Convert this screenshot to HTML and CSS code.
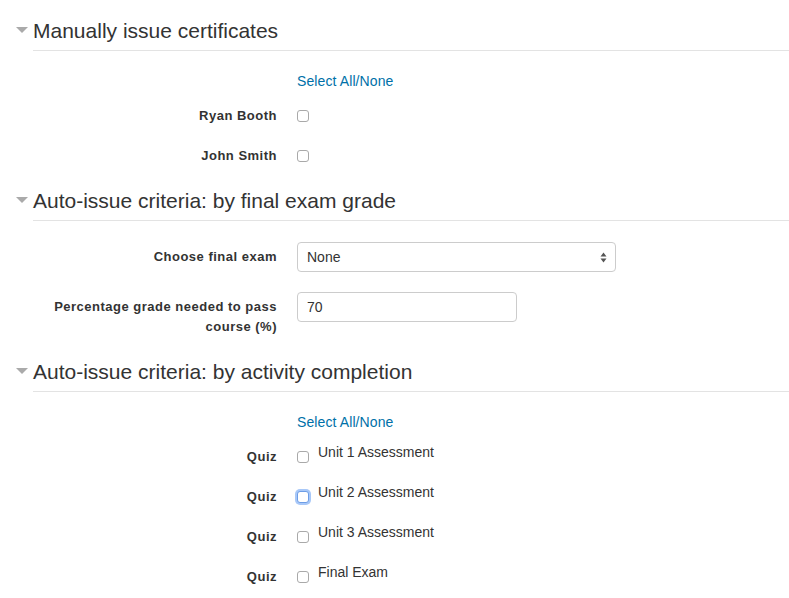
FILE: index.html
```html
<!DOCTYPE html>
<html>
<head>
    <meta http-equiv="Content-Type" content="text/html; charset=UTF-8">
    <title>Certificates</title>
    <link rel="stylesheet" href="styles.css">
</head>

<body>
    <form class="mform">
        <div class="section first">
            <h2 class="legend">Manually issue certificates</h2>
            <div class="row short">
                <div class="label"></div>
                <div class="control"><a href="#" class="select-all">Select All/None</a></div>
            </div>
            <div class="row">
                <div class="label">Ryan Booth</div>
                <div class="control"><input type="checkbox" class="check"></div>
            </div>
            <div class="row">
                <div class="label">John Smith</div>
                <div class="control"><input type="checkbox" class="check"></div>
            </div>
        </div>

        <div class="section">
            <h2 class="legend">Auto-issue criteria: by final exam grade</h2>
            <div class="row field first-field">
                <div class="label padded">Choose final exam</div>
                <div class="control">
                    <div class="select">
                        <span>None</span>
                        <svg class="arrows" width="7" height="11" viewBox="0 0 7 11">
                            <path d="M3.5 0.5 L6.5 4.5 L0.5 4.5 Z M3.5 10.5 L6.5 6.5 L0.5 6.5 Z" fill="#555"/>
                        </svg>
                    </div>
                </div>
            </div>
            <div class="row field">
                <div class="label padded">Percentage grade needed to pass course (%)</div>
                <div class="control">
                    <div class="text-input">70</div>
                </div>
            </div>
        </div>

        <div class="section after-fields">
            <h2 class="legend">Auto-issue criteria: by activity completion</h2>
            <div class="row short">
                <div class="label"></div>
                <div class="control"><a href="#" class="select-all">Select All/None</a></div>
            </div>
            <div class="row">
                <div class="label">Quiz</div>
                <div class="control activity"><input type="checkbox" class="check"><span>Unit 1 Assessment</span></div>
            </div>
            <div class="row">
                <div class="label">Quiz</div>
                <div class="control activity"><input type="checkbox" class="check focused"><span>Unit 2 Assessment</span></div>
            </div>
            <div class="row">
                <div class="label">Quiz</div>
                <div class="control activity"><input type="checkbox" class="check"><span>Unit 3 Assessment</span></div>
            </div>
            <div class="row">
                <div class="label">Quiz</div>
                <div class="control activity"><input type="checkbox" class="check"><span>Final Exam</span></div>
            </div>
        </div>
    </form>
</body>

</html>
```

FILE: styles.css
```css
body {
    margin: 0;
    font-family: "Liberation Sans", Arial, sans-serif;
    font-size: 14px;
    color: #333;
    background: #fff;
}

.section {
    margin-top: 13px;
}
.section.first {
    margin-top: 19px;
}
.section.after-fields {
    margin-top: 23px;
}

.legend {
    margin: 0 0 0 33px;
    padding-bottom: 7px;
    border-bottom: 1px solid #e3e3e3;
    font-size: 21px;
    font-weight: normal;
    line-height: 24px;
    color: #333;
}
.legend::before {
    content: "";
    display: inline-block;
    margin-left: -17px;
    margin-right: 5px;
    vertical-align: middle;
    position: relative;
    top: -2px;
    border-left: 6px solid transparent;
    border-right: 6px solid transparent;
    border-top: 6px solid #aaa;
}

.row {
    display: flex;
    height: 40px;
    align-items: center;
}
.row.short {
    height: 30px;
    margin-top: 15px;
}

.label {
    width: 244px;
    margin-left: 33px;
    text-align: right;
    font-size: 13px;
    font-weight: bold;
    letter-spacing: 0.5px;
    line-height: 20px;
}

.control {
    margin-left: 20px;
    display: flex;
    align-items: center;
}

.select-all {
    color: #0070a8;
    text-decoration: none;
    letter-spacing: 0.1px;
}

.check {
    appearance: none;
    -webkit-appearance: none;
    box-sizing: border-box;
    width: 12px;
    height: 12px;
    margin: -1px 0 0 0;
    border: 1px solid #a9a9a9;
    border-radius: 3px;
    background: #fff;
}
.check.focused {
    border-color: #6d9de6;
    box-shadow: 0 0 0 2px #a8c8f8;
}

.activity span {
    margin-left: 9px;
    line-height: 20px;
    position: relative;
    top: -5px;
}
.activity .check {
    margin-top: 0;
}

.field {
    height: auto;
    align-items: flex-start;
    margin-top: 20px;
}
.field.first-field {
    margin-top: 21px;
}
.label.padded {
    padding-top: 5px;
}

.select {
    box-sizing: border-box;
    width: 319px;
    height: 30px;
    padding: 0 8px 0 9px;
    border: 1px solid #ccc;
    border-radius: 4px;
    display: flex;
    align-items: center;
    justify-content: space-between;
}

.text-input {
    box-sizing: border-box;
    width: 220px;
    height: 30px;
    padding: 0 9px;
    border: 1px solid #ccc;
    border-radius: 4px;
    line-height: 28px;
}
```
